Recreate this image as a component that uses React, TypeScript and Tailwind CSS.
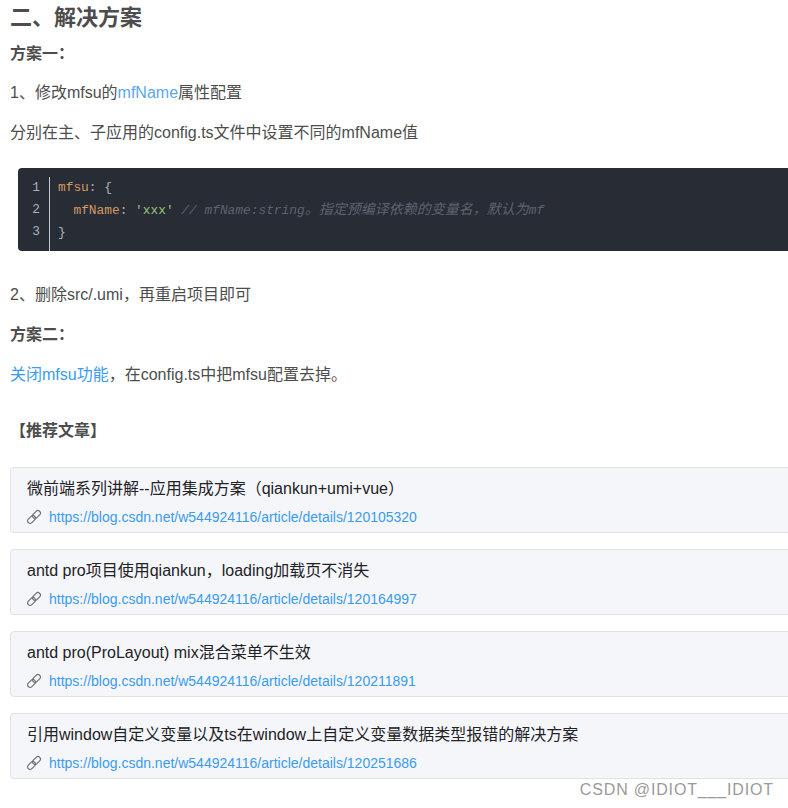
const sans = "font-['Liberation_Sans','Noto_Sans_CJK_SC',sans-serif]";

interface Recommend {
  title: string;
  url: string;
}

const recommends: Recommend[] = [
  {
    title: "微前端系列讲解--应用集成方案（qiankun+umi+vue）",
    url: "https://blog.csdn.net/w544924116/article/details/120105320",
  },
  {
    title: "antd pro项目使用qiankun，loading加载页不消失",
    url: "https://blog.csdn.net/w544924116/article/details/120164997",
  },
  {
    title: "antd pro(ProLayout) mix混合菜单不生效",
    url: "https://blog.csdn.net/w544924116/article/details/120211891",
  },
  {
    title: "引用window自定义变量以及ts在window上自定义变量数据类型报错的解决方案",
    url: "https://blog.csdn.net/w544924116/article/details/120251686",
  },
];

// diagonal chain link, two overlapping capsules
function LinkIcon() {
  return (
    <svg viewBox="0 0 16 16" className="-ml-px h-[16px] w-[16px] text-[#707070]" fill="none" stroke="currentColor" strokeWidth="1.2">
      <rect x="6" y="3" width="9" height="5" rx="2.5" transform="rotate(-45 10.5 5.5)" />
      <rect x="1" y="8" width="9" height="5" rx="2.5" transform="rotate(-45 5.5 10.5)" />
    </svg>
  );
}

function Card({ item }: { item: Recommend }) {
  return (
    <div className="h-[66px] w-[800px] rounded-[4px] border border-[#dfe1e5] bg-[#f5f6fa] px-4 pt-[9px]">
      <div className="text-base leading-6 text-[#222226]">{item.title}</div>
      <div className="mt-1 flex h-6 items-center gap-[7px]">
        <LinkIcon />
        <a className="text-sm text-[#3a9bf0]">{item.url}</a>
      </div>
    </div>
  );
}

export default function App() {
  return (
    <div className={`relative h-[808px] w-[788px] overflow-hidden bg-white pl-[10px] text-[#4d4d4d] ${sans}`}>
      {/* Heading */}
      <h2 className="h-[36px] text-[22px] font-bold leading-[36px]">二、解决方案</h2>
      <p className="mt-[6px] text-base font-bold leading-6">方案一：</p>
      <p className="mt-[15px] text-base leading-6">
        1、修改mfsu的<span className="text-[#5ba7ee]">mfName</span>属性配置
      </p>
      <p className="mt-4 text-base leading-6">分别在主、子应用的config.ts文件中设置不同的mfName值</p>

      {/* Code block */}
      <div className="mt-[23px] ml-2 flex h-[83px] w-[800px] rounded-[4px] bg-[#282c34] pt-[9px] pl-[12px] font-['Liberation_Mono','Noto_Sans_CJK_SC',monospace] text-[12.85px] leading-[22px]">
        <div className="w-[20px] border-r border-[#c5c8ce] pr-[9px] text-right text-[#abb2bf]">
          <div>1</div>
          <div>2</div>
          <div>3</div>
        </div>
        <div className="pl-[8px] whitespace-pre text-[#abb2bf]">
          <div>
            <span className="text-[#d19a66]">mfsu</span>: {"{"}
          </div>
          <div>
            {"  "}
            <span className="text-[#d19a66]">mfName</span>: <span className="text-[#98c379]">'xxx'</span>{" "}
            <span className="text-[#5c6370] italic">
              // mfName:string<span className="text-[14px]">。指定预编译依赖的变量名，默认为</span>mf
            </span>
          </div>
          <div>{"}"}</div>
        </div>
      </div>

      <p className="mt-[32px] text-base leading-6">2、删除src/.umi，再重启项目即可</p>
      <p className="mt-4 text-base font-bold leading-6">方案二：</p>
      <p className="mt-4 text-base leading-6">
        <span className="text-[#3a9bf0]">关闭mfsu功能</span>，在config.ts中把mfsu配置去掉。
      </p>
      <p className="mt-[32px] text-base font-bold leading-6">【推荐文章】</p>

      {/* Recommended articles */}
      <div className="mt-6 flex flex-col gap-4">
        {recommends.map((item) => (
          <Card key={item.url} item={item} />
        ))}
      </div>

      {/* Watermark */}
      <div className="absolute top-[779px] right-[14px] text-base leading-[22px] tracking-[0.85px] text-[#9a9a9a]">
        CSDN @IDIOT___IDIOT
      </div>
    </div>
  );
}
